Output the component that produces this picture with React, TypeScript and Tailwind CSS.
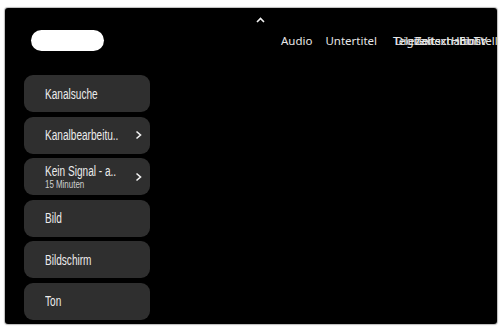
const menu = [
  { label: 'Kanalsuche' },
  { label: 'Kanalbearbeitu..', arrow: true },
  { label: 'Kein Signal - a..', sub: '15 Minuten', arrow: true },
  { label: 'Bild' },
  { label: 'Bildschirm' },
  { label: 'Ton' },
];

const narrow = { fontFamily: '"Liberation Sans Narrow", "Liberation Sans", sans-serif' };

function Chevron() {
  return (
    <svg width="7" height="10" viewBox="0 0 7 10" className="shrink-0">
      <path d="M1.5 1.5 L5.5 5 L1.5 8.5" fill="none" stroke="#f0f0f0" strokeWidth="1.6" />
    </svg>
  );
}

export default function App() {
  return (
    <div className="flex h-[329px] w-[501px] bg-white pb-[5px] pl-[5px] pr-[4px] pt-[8px]">
      <div className="relative flex flex-1 flex-col overflow-hidden rounded-[3px] bg-black pt-[22px] shadow-[0_0_1px_1px_#bbb]">
        <svg width="9" height="6" viewBox="0 0 9 6" className="absolute left-[251px] top-[9px]">
          <path d="M1 5 L4.5 1.5 L8 5" fill="none" stroke="#f2f2f2" strokeWidth="1.6" />
        </svg>
        <div className="flex h-[21px] items-center" style={{ fontFamily: '"Noto Sans", sans-serif' }}>
          <div className="ml-[26px] h-[21px] w-[73px] shrink-0 rounded-full bg-white" />
          <div className="ml-[177px] flex shrink-0 items-center whitespace-nowrap text-[11.5px] text-[#e6e6e6]">
            <span>Audio</span>
            <span className="ml-[13px]">Untertitel</span>
            <div className="relative ml-[16px] h-[17px] w-[110px]">
              <span className="absolute left-0 top-0">Teletext</span>
              <span className="absolute left-[2px] top-0">Digitaltext</span>
              <span className="absolute left-[22px] top-0">Zeitschaltuhr</span>
              <span className="absolute left-[58px] top-0">HbbTV</span>
              <span className="absolute left-[66px] top-0">Einstellungen</span>
            </div>
          </div>
        </div>
        <div className="ml-[19px] mt-[24px] flex w-[126px] flex-col gap-[4.5px]" style={narrow}>
          {menu.map((m) => (
            <div
              key={m.label}
              className="flex h-[37px] items-center rounded-[9px] bg-[#2f2f2f] pl-[21px] pr-[8px] text-[#ececec]"
            >
              <div className="min-w-0 flex-1">
                <div className="flex origin-left scale-x-[0.72] flex-col whitespace-nowrap leading-none">
                  <span className="text-[14px]">{m.label}</span>
                  {m.sub && <span className="mt-[1px] text-[11px] text-[#d0d0d0]">{m.sub}</span>}
                </div>
              </div>
              {m.arrow && <Chevron />}
            </div>
          ))}
        </div>
      </div>
    </div>
  );
}
